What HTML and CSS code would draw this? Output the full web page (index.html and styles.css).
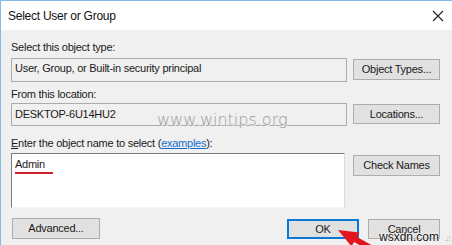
FILE: index.html
```html
<!DOCTYPE html>
<html>
<head>
<meta charset="utf-8">
<link rel="stylesheet" href="styles.css">
</head>
<body>
<div class="window">
  <div class="titlebar">
    <span class="title">Select User or Group</span>
    <svg class="close" width="12" height="12" viewBox="0 0 12 12"><path d="M1 1 L11 11 M11 1 L1 11" stroke="#222" stroke-width="1.1" fill="none"/></svg>
  </div>
  <div class="content">
    <div class="label l1">Select this object type:</div>
    <div class="row r1">
      <div class="field f1">User, Group, or Built-in security principal</div>
      <button class="btn b1">Object Types...</button>
    </div>
    <div class="label l2">From this location:</div>
    <div class="row r2">
      <div class="field f2">DESKTOP-6U14HU2</div>
      <button class="btn b2">Locations...</button>
    </div>
    <div class="label l3"><u>E</u>nter the object name to select (<a class="link">examples</a>):</div>
    <div class="row r3">
      <div class="textarea">
        <div class="entry">Admin</div>
        <div class="redline"></div>
      </div>
      <button class="btn b3">Check Names</button>
    </div>
    <div class="footer">
      <button class="btn adv">Advanced...</button>
      <div class="actions">
        <button class="btn ok">OK</button>
        <button class="btn cancel">Cancel</button>
      </div>
    </div>
  </div>
  <div class="wm1">www.wintips.org</div>
  <svg class="arrow" width="452" height="245" viewBox="0 0 452 245"><polygon points="338,230 359.5,232.5 357,237 379.5,249.5 376.5,254.5 354,242 351.5,246.5" fill="#e3151d"/></svg>
  <div class="wm2">wsxdn.com</div>
  <svg class="grip" width="8" height="8" viewBox="0 0 8 8"><g fill="#b5b5b5"><rect x="6" y="0" width="1" height="1"/><rect x="4" y="2" width="1" height="1"/><rect x="6" y="2" width="1" height="1"/><rect x="2" y="4" width="1" height="1"/><rect x="4" y="4" width="1" height="1"/><rect x="6" y="4" width="1" height="1"/></g></svg>
</div>
</body>
</html>
```
FILE: styles.css
```css
html, body {
  margin: 0;
  padding: 0;
}
body {
  width: 452px;
  height: 245px;
  overflow: hidden;
  font-family: "Liberation Sans", Arial, sans-serif;
  font-size: 11px;
  letter-spacing: -0.25px;
  color: #1a1a1a;
  background: #f0f0f0;
}
.window {
  position: relative;
  width: 452px;
  height: 245px;
  box-sizing: border-box;
  border-top: 1px solid #86b9e6;
  border-left: 1px solid #86b9e6;
  background: #f0f0f0;
}
.titlebar {
  height: 29px;
  background: #fff;
  display: flex;
  align-items: center;
  justify-content: space-between;
  padding: 0 8px 0 7px;
}
.title {
  font-size: 12px;
  color: #111;
  margin-top: 1px;
}
.close {
  display: block;
  margin-top: 1px;
}
.content {
  padding: 0 12px 0 10px;
}
.label {
  line-height: 13px;
  height: 13px;
  white-space: nowrap;
}
.l1 { margin-top: 11px; }
.l2 { margin-top: 6px; }
.l3 { margin-top: 11px; }
.link {
  color: #1a6ccc;
  text-decoration: underline;
}
.row {
  display: grid;
  grid-template-columns: 336px 87px;
  column-gap: 6px;
  align-items: start;
}
.r1 { margin-top: 4px; height: 24px; }
.r2 { margin-top: 2px; height: 23px; }
.r3 { margin-top: 3px; height: 55px; }
.field {
  box-sizing: border-box;
  border: 1px solid #ababab;
  background: #f0f0f0;
  padding-left: 3px;
  line-height: 13px;
  white-space: nowrap;
}
.f1 { height: 24px; padding-top: 3px; }
.f2 { height: 23px; padding-top: 4px; }
.btn {
  box-sizing: border-box;
  font-family: inherit;
  font-size: 11px;
  letter-spacing: -0.25px;
  color: #1a1a1a;
  background: #e1e1e1;
  border: 1px solid #adadad;
  padding: 0;
  margin: 0;
  height: 21px;
  line-height: 17px;
  text-align: center;
}
.b1 { margin-top: 1px; }
.b2 { margin-top: 1px; height: 20px; }
.b3 { margin-top: 2px; height: 21px; }
.textarea {
  box-sizing: border-box;
  height: 55px;
  width: 334px;
  background: #fff;
  border-top: 1px solid #7a7a7a;
  border-left: 1px solid #7a7a7a;
  border-right: 1px solid #dcdcdc;
  border-bottom: 1px solid #f4f4f4;
  padding: 4px 0 0 3px;
}
.entry {
  line-height: 13px;
}
.redline {
  width: 38px;
  height: 2px;
  margin-top: 1px;
  background: #cf1f2a;
}
.footer {
  margin-top: 10px;
  display: flex;
  justify-content: space-between;
  align-items: flex-start;
}
.adv {
  width: 88px;
  height: 21px;
  margin-left: 1px;
}
.actions {
  display: flex;
  gap: 9px;
  margin-top: 1px;
}
.ok {
  width: 72px;
  height: 20px;
  border: 2px solid #0a78d4;
  line-height: 16px;
}
.cancel {
  width: 72px;
  height: 20px;
}
.wm1 {
  position: absolute;
  left: 156px;
  top: 109px;
  font-family: "DejaVu Sans", sans-serif;
  font-size: 16px;
  font-weight: 300;
  letter-spacing: 0;
  line-height: 19px;
  color: #9b9b9b;
  text-shadow: 1px 1px 0 #ececec;
}
.arrow {
  position: absolute;
  left: -1px;
  top: -1px;
}
.wm2 {
  position: absolute;
  left: 378px;
  top: 229px;
  font-size: 12px;
  letter-spacing: 0;
  line-height: 14px;
  color: #111;
  text-shadow: 0 0 2px #fff, 0 0 2px #fff;
}
.grip {
  position: absolute;
  right: 1px;
  bottom: 1px;
}
```
